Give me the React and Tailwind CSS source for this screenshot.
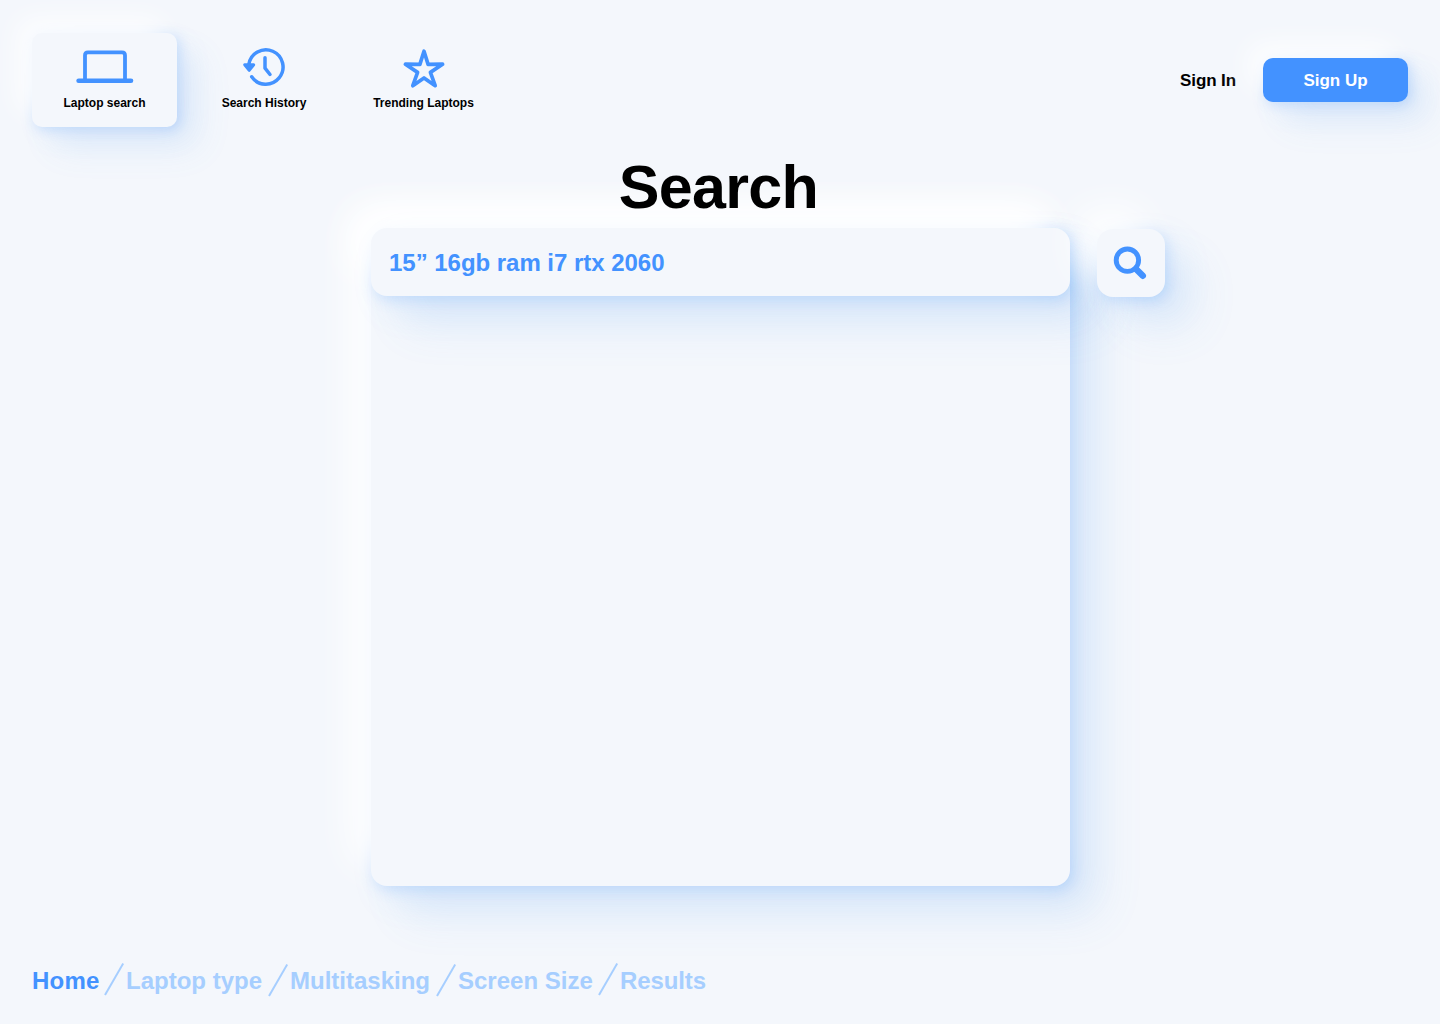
const raised =
  'shadow-[-20px_-20px_40px_rgba(255,255,255,0.95),2px_3px_14px_rgba(67,146,255,0.27),14px_14px_36px_rgba(72,155,245,0.1),32px_32px_44px_rgba(90,160,235,0.1)]';

const raisedSmall =
  'shadow-[-14px_-14px_28px_rgba(255,255,255,0.85),2px_2px_12px_rgba(67,146,255,0.27),10px_10px_28px_rgba(72,155,245,0.08),22px_22px_34px_rgba(90,160,235,0.1)]';

const LaptopIcon = () => (
  <svg className="h-[34px] w-[58px]" viewBox="0 0 58 34" fill="none" stroke="#4392ff" strokeLinecap="round">
    <path d="M9 31V6.300Q9 3.300 12 3.300H46Q49 3.300 49 6.300V31" strokeWidth="3.800" />
    <path d="M2.600 31.700H55" strokeWidth="4.600" />
  </svg>
);

const HistoryIcon = () => (
  <svg className="h-[40px] w-[44px]" viewBox="0 0 44 40" fill="none" stroke="#4392ff" strokeWidth="3.500" strokeLinecap="round" strokeLinejoin="round">
    <path d="M6.800 17.600A17.200 17.200 0 1 1 9.700 29.800" />
    <path d="M23 10.800V21.200L28 27.500" />
    <path d="M2.700 17.700H11.700L7.200 23.400Z" fill="#4392ff" strokeWidth="3" />
  </svg>
);

const StarIcon = () => (
  <svg className="h-[42px] w-[44px]" viewBox="0 0 44 42" fill="none" stroke="#4392ff" strokeWidth="3.700" strokeLinejoin="round">
    <path d="M22 4.200L26.100 17.400L40.600 17.200L28.400 25.400L33.200 38.700L22 30.900L10.800 38.700L15.600 25.400L3.400 17.200L17.900 17.400Z" />
  </svg>
);

const SearchIcon = () => (
  <svg className="h-[36px] w-[36px]" viewBox="0 0 36 36" fill="none" stroke="#4392ff" strokeLinecap="round">
    <circle cx="14.400" cy="15.200" r="11.200" strokeWidth="4.900" />
    <path d="M23 24L29.800 30.800" strokeWidth="6.400" />
  </svg>
);

const crumbs = [
  { label: 'Home', width: 'w-[72px]', tone: 'text-[#4392ff] tracking-[0.200px]', gap: 'ml-0', drop: 'mt-0' },
  { label: 'Laptop type', width: 'w-[142px]', tone: 'text-[#a6ceff]', gap: 'ml-[2px]', drop: 'mt-[1px]' },
  { label: 'Multitasking', width: 'w-[146px]', tone: 'text-[#a6ceff]', gap: 'ml-[2px]', drop: 'mt-[1px]' },
  { label: 'Screen Size', width: 'w-[140px]', tone: 'text-[#a6ceff]', gap: 'ml-[2px]', drop: 'mt-0' },
  { label: 'Results', width: 'w-[90px]', tone: 'text-[#a6ceff] tracking-[-0.100px]', gap: 'ml-[2px]', drop: null },
];

export default function App() {
  return (
    <div className="flex h-[1024px] w-[1440px] flex-col overflow-hidden bg-[#f4f7fc] font-['Liberation_Sans',Arial,sans-serif] font-bold text-black">
      <header className="flex h-[127px] shrink-0 items-start px-8 pt-[33px]">
        <nav className="flex text-xs leading-4">
          <a className={`flex h-[93.500px] w-[145px] flex-col items-center rounded-[10px] bg-[#f4f7fc] pt-4 ${raisedSmall}`}>
            <LaptopIcon />
            <span className="mt-3 whitespace-nowrap">Laptop search</span>
          </a>
          <a className="ml-[14px] flex w-[146px] flex-col items-center pt-[14px]">
            <HistoryIcon />
            <span className="mt-2 whitespace-nowrap">Search History</span>
          </a>
          <a className="ml-[14px] flex w-[145px] flex-col items-center pt-[14px]">
            <StarIcon />
            <span className="mt-[6px] whitespace-nowrap">Trending Laptops</span>
          </a>
        </nav>
        <div className="ml-auto mt-[25px] flex items-center text-[17px] leading-6">
          <a className="mr-[27px] whitespace-nowrap pt-px tracking-[-0.100px]">Sign In</a>
          <button className={`h-11 w-[145px] rounded-[10px] bg-[#4392ff] pt-px text-white ${raisedSmall}`}>Sign Up</button>
        </div>
      </header>

      <main className="flex flex-col">
        <div className="relative z-10 mt-[24px] h-[77px] text-center text-[61px] leading-[72px] tracking-[-0.700px]">
          <h1 className="pr-[3px]">Search</h1>
        </div>
        <div className="ml-[371px] flex items-start">
          <section className={`h-[658px] w-[699px] rounded-2xl bg-[#f4f7fc] ${raised}`}>
            <div className={`flex h-[68px] items-center rounded-2xl bg-[#f4f7fc] pl-[18px] text-2xl text-[#4392ff] ${raised}`}>
              <span className="whitespace-nowrap pt-[2px] tracking-[-0.030px]">15” 16gb ram i7 rtx 2060</span>
            </div>
          </section>
          <button aria-label="Search" className={`ml-[27px] mt-[0.500px] flex size-[68px] items-center justify-center rounded-2xl bg-[#f4f7fc] ${raised}`}>
            <SearchIcon />
          </button>
        </div>
      </main>

      <footer className="mt-[76px] flex h-10 items-start pl-8 text-2xl leading-[38px]">
        {crumbs.map(({ label, width, tone, gap, drop }) => (
          <div key={label} className={`flex items-start ${gap}`}>
            <span className={`whitespace-nowrap ${width} ${tone}`}>{label}</span>
            {drop && (
              <svg className={`h-[34px] w-5 ${drop}`} viewBox="0 0 20 34" fill="none" stroke="#a6ceff" strokeWidth="2">
                <path d="M1 33L19.200 1.500" />
              </svg>
            )}
          </div>
        ))}
      </footer>
    </div>
  );
}
